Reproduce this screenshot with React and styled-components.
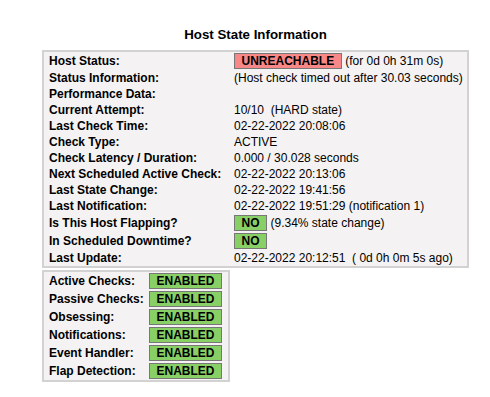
import React from "react";
import styled, { createGlobalStyle } from "styled-components";

const Global = createGlobalStyle`
  body {
    margin: 8px;
    background: #ffffff;
    font-family: "Liberation Sans", Arial, sans-serif;
    font-size: 12px;
    color: #000;
  }
`;

const Page = styled.div`
  width: 427px;
  margin-left: 34px;
  display: flex;
  flex-direction: column;
  align-items: flex-start;
`;

const Title = styled.div`
  align-self: stretch;
  text-align: center;
  font-weight: bold;
  font-size: 13.3px;
  line-height: 16px;
  padding-top: 19px;
  margin-bottom: 7px;
`;

const InfoBox = styled.div`
  width: ${(p) => p.$width}px;
  box-sizing: border-box;
  background: #f4f2f2;
  border: 2px solid #d2d2d2;
  padding: 0 5px;
  display: grid;
  grid-template-columns: ${(p) => p.$labelWidth}px 1fr;
  margin-bottom: ${(p) => p.$gap || 0}px;
`;

const Label = styled.div`
  font-weight: bold;
  height: ${(p) => (p.$tall ? 18 : 16)}px;
  display: flex;
  align-items: center;
  white-space: nowrap;
`;

const Value = styled.div`
  height: ${(p) => (p.$tall ? 18 : 16)}px;
  display: flex;
  align-items: center;
  white-space: pre;
`;

const COLORS = {
  UNREACHABLE: "#f88888",
  OK: "#88d066",
};

const Badge = styled.span`
  display: inline-block;
  box-sizing: border-box;
  height: 16px;
  line-height: 14px;
  padding: 0 6.5px;
  border: 1px solid #777777;
  background: ${(p) => COLORS[p.$kind]};
  font-weight: bold;
  color: #000;
  margin-right: ${(p) => (p.$after ? 3.5 : 0)}px;
`;

const rows = [
  { label: "Host Status:", badge: "UNREACHABLE", kind: "UNREACHABLE", text: "(for 0d 0h 31m 0s)" },
  { label: "Status Information:", text: "(Host check timed out after 30.03 seconds)" },
  { label: "Performance Data:", text: "" },
  { label: "Current Attempt:", text: "10/10  (HARD state)" },
  { label: "Last Check Time:", text: "02-22-2022 20:08:06" },
  { label: "Check Type:", text: "ACTIVE" },
  { label: "Check Latency / Duration:", text: "0.000 / 30.028 seconds" },
  { label: "Next Scheduled Active Check:", text: "02-22-2022 20:13:06" },
  { label: "Last State Change:", text: "02-22-2022 19:41:56" },
  { label: "Last Notification:", text: "02-22-2022 19:51:29 (notification 1)" },
  { label: "Is This Host Flapping?", badge: "NO", kind: "OK", text: "(9.34% state change)" },
  { label: "In Scheduled Downtime?", badge: "NO", kind: "OK", text: "" },
  { label: "Last Update:", text: "02-22-2022 20:12:51  ( 0d 0h 0m 5s ago)" },
];

const checks = [
  "Active Checks:",
  "Passive Checks:",
  "Obsessing:",
  "Notifications:",
  "Event Handler:",
  "Flap Detection:",
];

export default function App() {
  return (
    <>
      <Global />
      <Page>
        <Title>Host State Information</Title>
        <InfoBox $width={427} $labelWidth={185} $gap={2}>
          {rows.map((r) => (
            <React.Fragment key={r.label}>
              <Label $tall={!!r.badge}>{r.label}</Label>
              <Value $tall={!!r.badge}>
                {r.badge && (
                  <Badge $kind={r.kind} $after={!!r.text}>
                    {r.badge}
                  </Badge>
                )}
                {r.text}
              </Value>
            </React.Fragment>
          ))}
        </InfoBox>
        <InfoBox $width={188} $labelWidth={100}>
          {checks.map((c) => (
            <React.Fragment key={c}>
              <Label $tall>{c}</Label>
              <Value $tall>
                <Badge $kind="OK">ENABLED</Badge>
              </Value>
            </React.Fragment>
          ))}
        </InfoBox>
      </Page>
    </>
  );
}
